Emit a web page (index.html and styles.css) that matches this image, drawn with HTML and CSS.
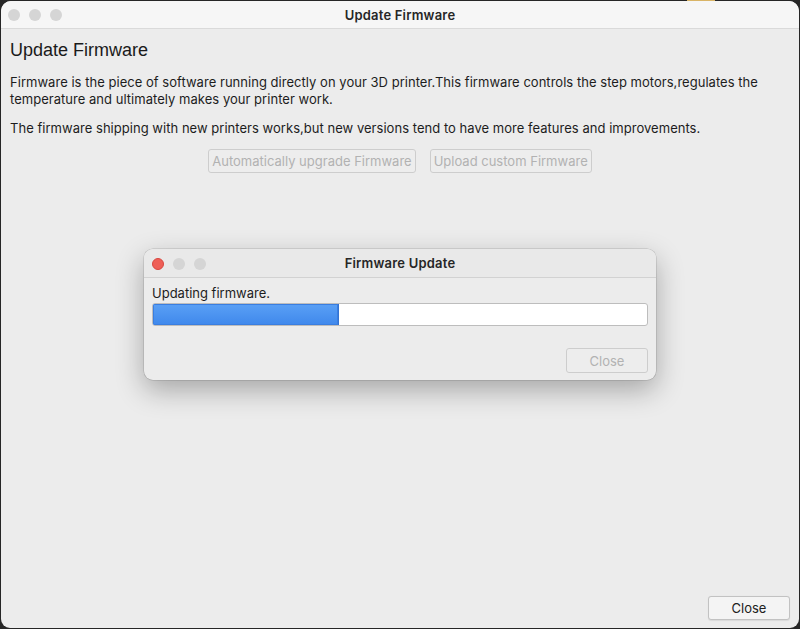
FILE: index.html
```html
<!DOCTYPE html>
<html>
<head>
<meta charset="utf-8">
<link rel="stylesheet" href="styles.css">
</head>
<body>
<div class="behind"></div>
<div class="window">
  <div class="titlebar">
    <div class="lights">
      <span class="light"></span><span class="light"></span><span class="light"></span>
    </div>
    <div class="title">Update Firmware</div>
  </div>
  <div class="content">
    <h1 class="heading">Update Firmware</h1>
    <p class="para">Firmware is the piece of software running directly on your 3D printer.This firmware controls the step motors,regulates the temperature and ultimately makes your printer work.</p>
    <p class="para">The firmware shipping with new printers works,but new versions tend to have more features and improvements.</p>
    <div class="actions">
      <button class="btn disabled">Automatically upgrade Firmware</button>
      <button class="btn disabled">Upload custom Firmware</button>
    </div>
    <div class="spacer"></div>
    <div class="footer">
      <button class="btn close-main">Close</button>
    </div>
  </div>

  <div class="dialog">
    <div class="dtitlebar">
      <div class="lights dlights">
        <span class="light red"></span><span class="light"></span><span class="light"></span>
      </div>
      <div class="dtitle">Firmware Update</div>
    </div>
    <div class="dbody">
      <div class="dlabel">Updating firmware.</div>
      <div class="progress"><div class="fill" style="width:37.7%"></div></div>
      <div class="dfooter">
        <button class="btn disabled dclose">Close</button>
      </div>
    </div>
  </div>
</div>
</body>
</html>
```

FILE: styles.css
```css
html, body {
  margin: 0;
  padding: 0;
  background: #262626;
  width: 800px;
  height: 629px;
  overflow: hidden;
  font-family: Inter, "Liberation Sans", Arial, sans-serif;
  color: #1d1d1d;
}
.behind {
  position: absolute;
  left: 687px;
  top: 0;
  width: 28px;
  height: 3px;
  background: #d9b466;
}
.window {
  position: relative;
  margin: 1px 1px 0 1px;
  width: 798px;
  height: 627px;
  background: #ececec;
  border-radius: 10px 10px 9px 9px;
  overflow: hidden;
  display: flex;
  flex-direction: column;
}
.titlebar {
  height: 27px;
  background: #f6f6f6;
  border-bottom: 1px solid #dadada;
  position: relative;
  display: flex;
  align-items: center;
  justify-content: center;
  flex-shrink: 0;
}
.lights {
  position: absolute;
  left: 7px;
  top: 8px;
  display: flex;
  gap: 9px;
}
.light {
  width: 12px;
  height: 12px;
  border-radius: 50%;
  background: #d5d5d5;
  display: block;
}
.light.red {
  background: #ee5f57;
  border: 0.5px solid #d8473f;
  box-sizing: border-box;
}
.title {
  font-weight: 600;
  font-size: 13px;
  letter-spacing: 0.2px;
  color: #262626;
}
.content {
  flex: 1;
  display: flex;
  flex-direction: column;
  padding: 9px 9px 8px 9px;
}
.heading {
  margin: 0;
  font-family: "Liberation Sans", Arial, sans-serif;
  font-weight: normal;
  font-size: 18px;
  line-height: 24px;
  color: #1a1a1a;
}
.para {
  margin: 12px 0 0 0;
  font-size: 13px;
  line-height: 17px;
  letter-spacing: 0.03px;
  color: #1d1d1d;
}
.para + .para {
  margin-top: 12px;
}
.actions {
  margin-top: 12px;
  display: flex;
  justify-content: center;
  gap: 14px;
}
.btn {
  font-family: Inter, "Liberation Sans", Arial, sans-serif;
  font-size: 13px;
  height: 24px;
  padding: 0 3px;
  background: #f0f0f0;
  border: 1px solid #c9c9c9;
  border-radius: 3px;
  color: #202020;
}
.btn.disabled {
  color: #b2b2b2;
  border-color: #cdcdcd;
  background: #ededed;
}
.spacer { flex: 1; }
.footer {
  display: flex;
  justify-content: flex-end;
}
.close-main {
  width: 82px;
  background: #f4f4f4;
  border-color: #c2c2c2;
  box-shadow: 0 0.5px 1px rgba(0,0,0,0.08);
}
.dialog {
  position: absolute;
  left: 143px;
  top: 248px;
  width: 512px;
  height: 131px;
  background: #ececec;
  border-radius: 9px;
  box-shadow: 0 0 0 0.5px rgba(0,0,0,0.18), 0 10px 28px rgba(0,0,0,0.3);
  overflow: hidden;
  display: flex;
  flex-direction: column;
}
.dtitlebar {
  height: 28px;
  background: #e9e9e9;
  border-bottom: 1px solid #d2d2d2;
  position: relative;
  display: flex;
  align-items: center;
  justify-content: center;
  flex-shrink: 0;
}
.dlights {
  left: 8px;
  top: 9px;
  gap: 9px;
}
.dtitle {
  font-weight: 600;
  font-size: 13px;
  letter-spacing: 0.2px;
  color: #262626;
}
.dbody {
  padding: 7px 8px 7px 8px;
  display: flex;
  flex-direction: column;
  flex: 1;
}
.dlabel {
  font-size: 13px;
  line-height: 17px;
  color: #1d1d1d;
}
.progress {
  height: 21px;
  margin-top: 1px;
  background: #ffffff;
  border: 1px solid #bdbdbd;
  border-radius: 3px;
  overflow: hidden;
}
.fill {
  height: 100%;
  background: linear-gradient(#5aa0f5, #3f88ec);
  border-right: 1px solid #3373d3;
  box-shadow: inset 0 0 0 1px #3a7ee0;
  box-sizing: border-box;
}
.dfooter {
  margin-top: 22px;
  display: flex;
  justify-content: flex-end;
}
.dclose {
  width: 82px;
  height: 25px;
}
```
